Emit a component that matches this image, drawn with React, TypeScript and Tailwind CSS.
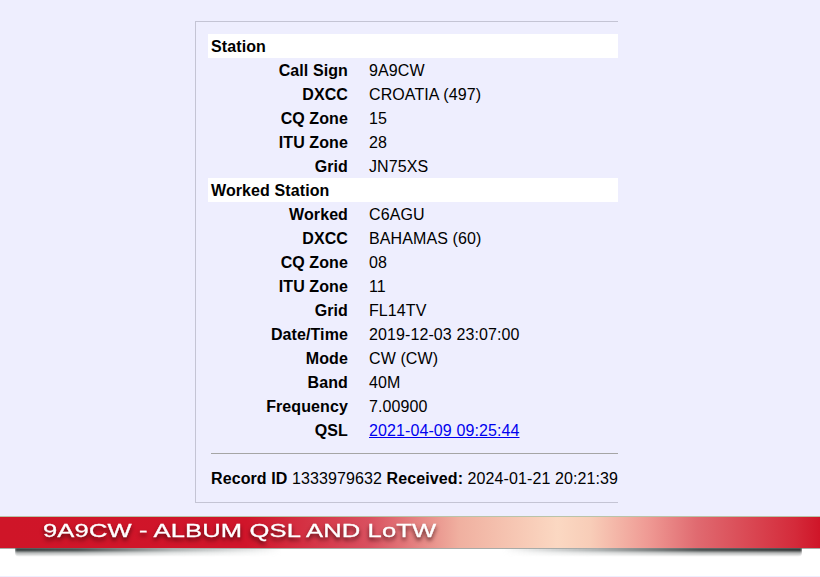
const stationRows = [
  ["Call Sign", "9A9CW"],
  ["DXCC", "CROATIA (497)"],
  ["CQ Zone", "15"],
  ["ITU Zone", "28"],
  ["Grid", "JN75XS"],
];
const workedRows = [
  ["Worked", "C6AGU"],
  ["DXCC", "BAHAMAS (60)"],
  ["CQ Zone", "08"],
  ["ITU Zone", "11"],
  ["Grid", "FL14TV"],
  ["Date/Time", "2019-12-03 23:07:00"],
  ["Mode", "CW (CW)"],
  ["Band", "40M"],
  ["Frequency", "7.00900"],
];

function Row({ label, children }: { label: string; children: React.ReactNode }) {
  return (
    <div className="flex h-6 leading-[26px]">
      <div className="w-[140px] shrink-0 text-right font-bold">{label}</div>
      <div className="ml-[21px] whitespace-nowrap">{children}</div>
    </div>
  );
}

function Header({ children }: { children: React.ReactNode }) {
  return <div className="h-6 bg-white pl-[3px] font-bold leading-[26px]">{children}</div>;
}

export default function App() {
  return (
    <div className="flex h-[577px] w-[820px] flex-col overflow-hidden bg-white font-['Liberation_Sans',Arial,sans-serif] text-[16px] tracking-[0.1px] text-black">
      <main className="h-[516px] shrink-0 bg-[#eeeefe] pl-[195px] pt-[21px]">
        <div className="h-[482px] w-[423px] overflow-hidden border-y border-l border-[#c4c4d4] pl-3 pt-3">
          <Header>Station</Header>
          {stationRows.map(([l, v]) => (
            <Row key={l} label={l}>{v}</Row>
          ))}
          <Header>Worked Station</Header>
          {workedRows.map(([l, v]) => (
            <Row key={l + v} label={l}>{v}</Row>
          ))}
          <Row label="QSL">
            <a href="#" className="text-[#0000ee] underline">2021-04-09 09:25:44</a>
          </Row>
          <div className="ml-[3px] mt-[11px] border-t border-[#a5a5a5]" />
          <div className="ml-[3px] mt-3 whitespace-nowrap leading-[26px]">
            <b>Record ID</b> 1333979632 <b>Received:</b> 2024-01-21 20:21:39
          </div>
        </div>
      </main>
      <div className="relative h-[32px] shrink-0 border-t border-[#b9c4a8] bg-[linear-gradient(90deg,#cf1528_0%,#d0152a_30%,#d9505f_45%,#f0b0a0_56%,#fbd8c2_68%,#f8cdb8_72%,#ef9a94_79%,#e06a70_85%,#d42a3a_97%,#cf1528_100%)]">
        <div className="absolute left-[43px] top-[2px] origin-left scale-x-[1.42] whitespace-nowrap text-[18px] leading-6 tracking-[0.1px] text-white [-webkit-text-stroke:0.3px_white] [text-shadow:0px_3px_4px_rgba(50,5,10,0.9)]">
          9A9CW - ALBUM QSL AND LoTW
        </div>
      </div>
      <div className="relative flex-1">
        <div className="h-px bg-[#a8aca8]" />
        <div className="absolute left-[15px] right-[18px] top-0 h-[9px] rounded-b-[4px] bg-[linear-gradient(90deg,#2a3232_0%,#3e4646_8%,#a8aeae_20%,rgba(255,255,255,0)_34%,rgba(255,255,255,0)_62%,#a8acac_74%,#3e4444_87%,#262a2a_100%)] blur-[1px] [mask-image:linear-gradient(180deg,#000_0%,#000_20%,rgba(0,0,0,0.35)_55%,transparent_100%)]" />
        <div className="absolute bottom-0 left-0 right-0 h-px bg-[#eeeefe]" />
      </div>
    </div>
  );
}
